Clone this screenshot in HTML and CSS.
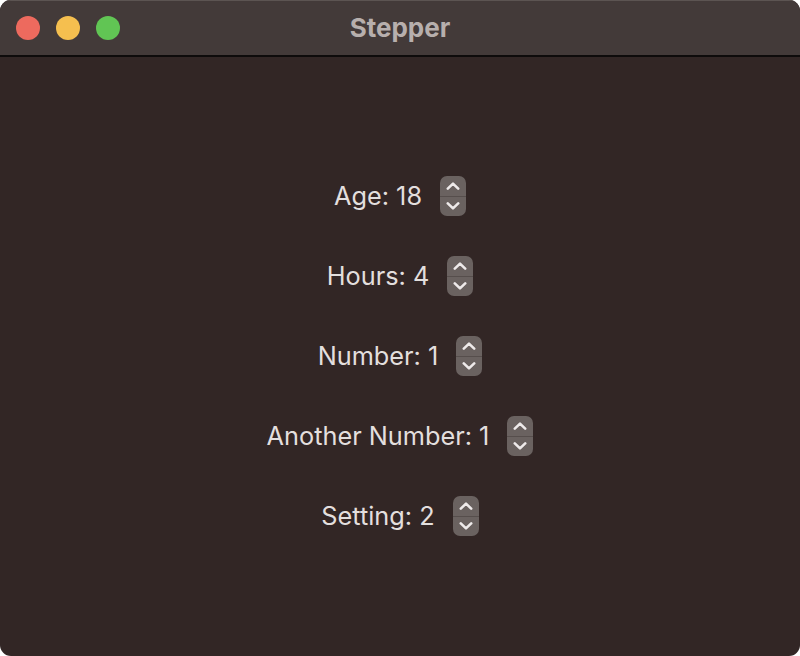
FILE: index.html
```html
<!DOCTYPE html>
<html>
<head>
<meta charset="utf-8">
<title>Stepper</title>
<link rel="stylesheet" href="styles.css">
</head>
<body>
<div class="window">
  <div class="titlebar">
    <div class="lights">
      <span class="light red"></span>
      <span class="light yellow"></span>
      <span class="light green"></span>
    </div>
    <div class="title">Stepper</div>
  </div>
  <div class="content">
    <div class="row"><span class="label">Age: 18</span><span class="stepper"><span class="half up"><svg viewBox="0 0 14 8" width="14" height="8"><path d="M1.8 6.6 L7 1.6 L12.2 6.6" /></svg></span><span class="half down"><svg viewBox="0 0 14 8" width="14" height="8"><path d="M1.8 1.4 L7 6.4 L12.2 1.4" /></svg></span></span></div>
    <div class="row"><span class="label">Hours: 4</span><span class="stepper"><span class="half up"><svg viewBox="0 0 14 8" width="14" height="8"><path d="M1.8 6.6 L7 1.6 L12.2 6.6" /></svg></span><span class="half down"><svg viewBox="0 0 14 8" width="14" height="8"><path d="M1.8 1.4 L7 6.4 L12.2 1.4" /></svg></span></span></div>
    <div class="row"><span class="label">Number: 1</span><span class="stepper"><span class="half up"><svg viewBox="0 0 14 8" width="14" height="8"><path d="M1.8 6.6 L7 1.6 L12.2 6.6" /></svg></span><span class="half down"><svg viewBox="0 0 14 8" width="14" height="8"><path d="M1.8 1.4 L7 6.4 L12.2 1.4" /></svg></span></span></div>
    <div class="row"><span class="label">Another Number: 1</span><span class="stepper"><span class="half up"><svg viewBox="0 0 14 8" width="14" height="8"><path d="M1.8 6.6 L7 1.6 L12.2 6.6" /></svg></span><span class="half down"><svg viewBox="0 0 14 8" width="14" height="8"><path d="M1.8 1.4 L7 6.4 L12.2 1.4" /></svg></span></span></div>
    <div class="row"><span class="label">Setting: 2</span><span class="stepper"><span class="half up"><svg viewBox="0 0 14 8" width="14" height="8"><path d="M1.8 6.6 L7 1.6 L12.2 6.6" /></svg></span><span class="half down"><svg viewBox="0 0 14 8" width="14" height="8"><path d="M1.8 1.4 L7 6.4 L12.2 1.4" /></svg></span></span></div>
  </div>
</div>
</body>
</html>
```
FILE: styles.css
```css
html, body {
  margin: 0;
  padding: 0;
  background: #ffffff;
}
.window {
  width: 800px;
  height: 656px;
  border-radius: 11px;
  overflow: hidden;
  background: #322625;
  display: flex;
  flex-direction: column;
  font-family: Inter, "Liberation Sans", sans-serif;
}
.titlebar {
  position: relative;
  flex: none;
  background: #433a39;
  border-top: 1px solid #5c5452;
  box-sizing: border-box;
  border-bottom: 2px solid #0e0b0b;
  height: 57px;
  display: flex;
  align-items: center;
  justify-content: center;
}
.lights {
  position: absolute;
  left: 16px;
  top: 15px;
  display: flex;
  gap: 16px;
}
.light {
  width: 24px;
  height: 24px;
  border-radius: 50%;
}
.red { background: #ed6a5e; }
.yellow { background: #f5bf4f; }
.green { background: #61c554; }
.title {
  color: #b7afad;
  font-weight: 700;
  font-size: 26px;
  margin-top: -2px;
}
.content {
  flex: 1;
  display: flex;
  flex-direction: column;
  align-items: center;
  padding-top: 119px;
  gap: 40px;
}
.row {
  display: flex;
  align-items: center;
  gap: 18px;
  height: 40px;
}
.label {
  color: #e3dfde;
  font-size: 25.3px;
  margin-top: -1px;
}
.stepper {
  width: 26px;
  height: 40px;
  border-radius: 7px;
  background: #6a6260;
  display: flex;
  flex-direction: column;
  overflow: hidden;
}
.half {
  flex: 1;
  display: flex;
  align-items: center;
  justify-content: center;
}
.up {
  border-bottom: 1px solid #564e4c;
}
.half svg path {
  fill: none;
  stroke: #eeeaea;
  stroke-width: 2.6;
  stroke-linecap: round;
  stroke-linejoin: round;
}
```
